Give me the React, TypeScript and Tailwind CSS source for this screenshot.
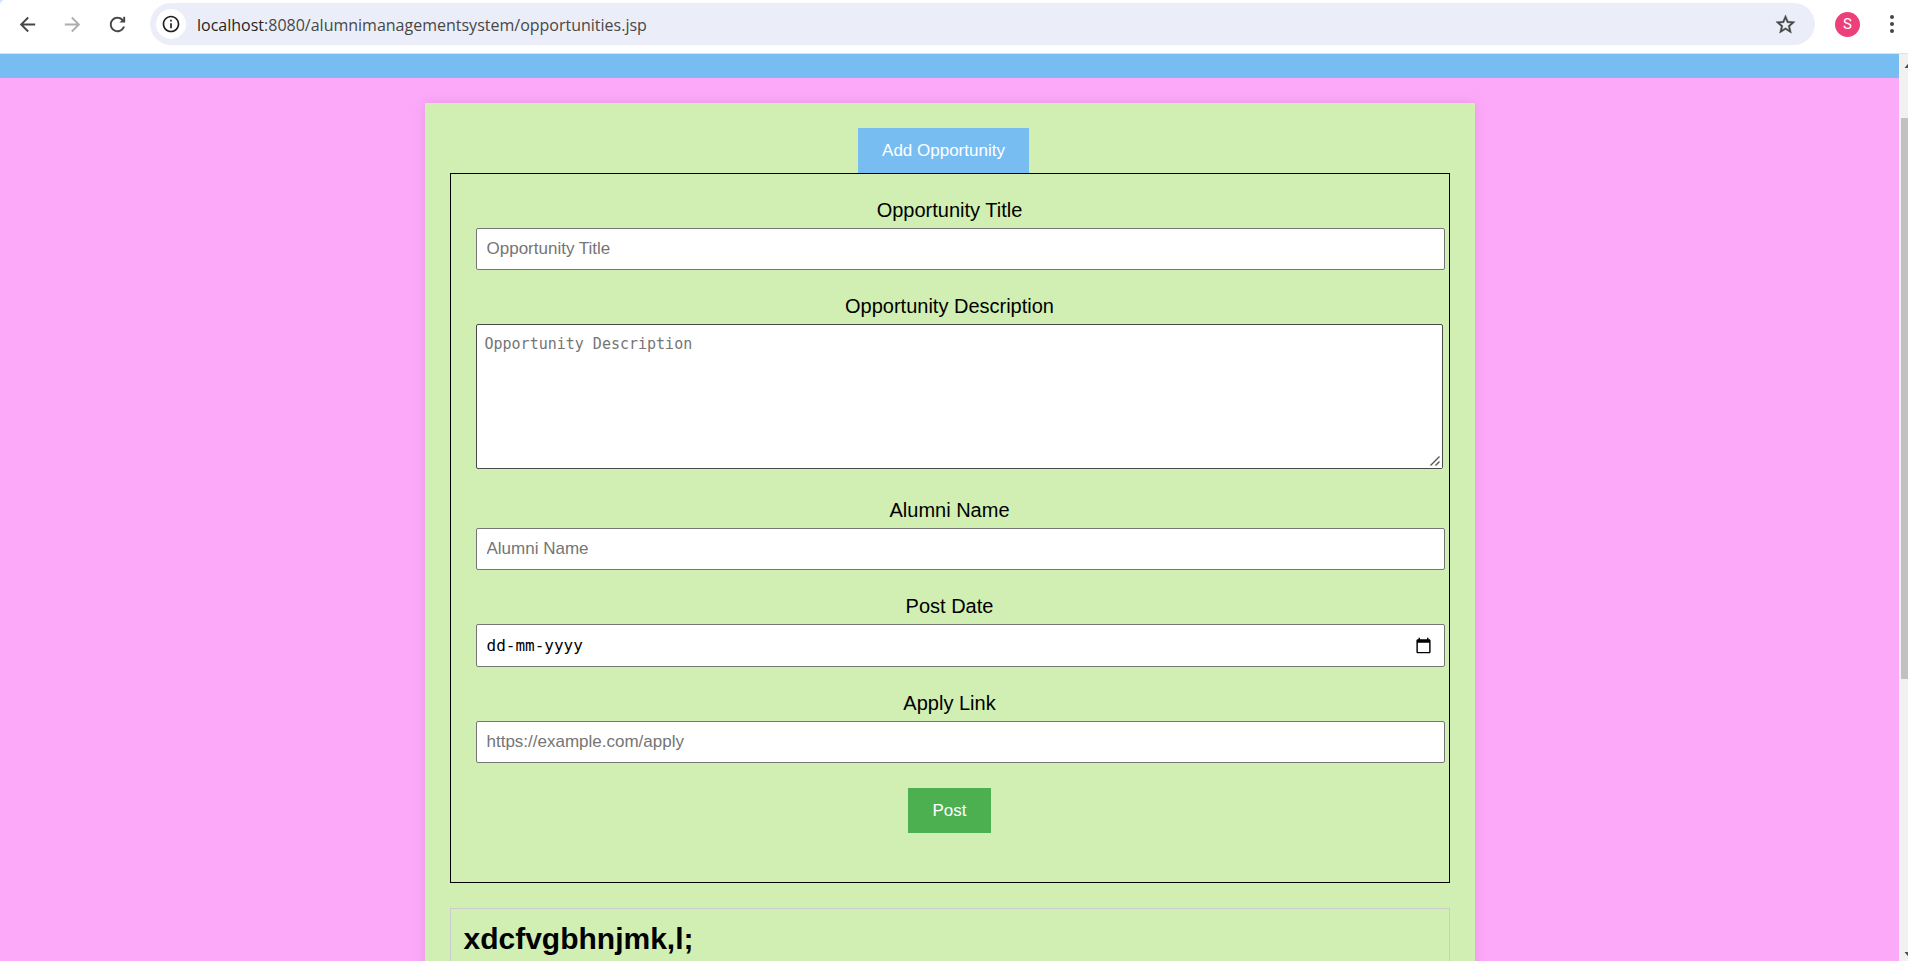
import React from "react";

const labelClass = "block h-[23px] text-xl leading-[23px] text-black";
const fieldClass =
  "block w-[calc(100%+21px)] rounded-[2px] border border-[#767676] bg-white px-[10px] text-[17px] text-black placeholder:text-[#757575]";

function Toolbar() {
  return (
    <header className="h-[54px] shrink-0 border-b border-[#dfe1e5] bg-[#d3e3fd]">
      <nav aria-label="Browser" className="flex h-full items-center rounded-tl-[5px] bg-white pb-[5px]">
        <button type="button" aria-label="Back" className="ml-[15px] flex size-[25px] items-center justify-center text-[#474747]">
          <svg viewBox="0 0 24 24" className="size-[23px]" fill="currentColor">
            <path d="M20 11H7.83l5.59-5.59L12 4l-8 8 8 8 1.41-1.41L7.83 13H20v-2z" />
          </svg>
        </button>
        <button type="button" aria-label="Forward" className="ml-5 flex size-[25px] items-center justify-center text-[#aeaeae]">
          <svg viewBox="0 0 24 24" className="size-[23px]" fill="currentColor">
            <path d="M12 4l-1.41 1.41L16.17 11H4v2h12.17l-5.58 5.59L12 20l8-8z" />
          </svg>
        </button>
        <button type="button" aria-label="Reload" className="ml-5 flex size-[25px] items-center justify-center text-[#474747]">
          <svg viewBox="0 0 24 24" className="size-[23px]" fill="currentColor">
            <path d="M17.65 6.35C16.2 4.9 14.21 4 12 4c-4.42 0-7.99 3.58-7.99 8s3.57 8 7.99 8c3.73 0 6.84-2.55 7.73-6h-2.08c-.82 2.33-3.04 4-5.65 4-3.31 0-6-2.69-6-6s2.69-6 6-6c1.66 0 3.14.69 4.22 1.78L14 10h6V4h-2v2.7z" />
          </svg>
        </button>
        <div className="ml-5 flex h-[42px] flex-1 items-center rounded-full bg-[#ebeef8] px-1.5">
          <button type="button" aria-label="Site information" className="flex size-[30px] items-center justify-center rounded-full bg-white text-[#1f1f1f]">
            <svg viewBox="0 0 24 24" className="size-5" fill="currentColor">
              <path d="M11 7h2v2h-2zm0 4h2v6h-2zm1-9C6.48 2 2 6.48 2 12s4.48 10 10 10 10-4.48 10-10S17.52 2 12 2zm0 18c-4.41 0-8-3.59-8-8s3.59-8 8-8 8 3.59 8 8-3.59 8-8 8z" />
            </svg>
          </button>
          <p className="ml-[11px] flex-1 pt-0.5 font-['Open_Sans','Noto_Sans',sans-serif] text-base leading-6 text-[#474747]">
            <span className="text-[#1f1f1f]">localhost</span>:8080/alumnimanagementsystem/opportunities.jsp
          </p>
          <button type="button" aria-label="Bookmark this page" className="mr-3 flex size-6 items-center justify-center text-[#474747]">
            <svg viewBox="0 0 24 24" className="size-[23px]" fill="currentColor">
              <path d="M22 9.24l-7.19-.62L12 2 9.19 8.63 2 9.24l5.46 4.73L5.82 21 12 17.27 18.18 21l-1.63-7.03L22 9.24zM12 15.4l-3.76 2.27 1-4.28-3.32-2.88 4.38-.38L12 6.1l1.71 4.04 4.38.38-3.32 2.88 1 4.28L12 15.4z" stroke="currentColor" strokeWidth="0.4" />
            </svg>
          </button>
        </div>
        <button type="button" aria-label="Profile" className="ml-5 flex size-[25px] items-center justify-center rounded-full bg-[#ec407a] font-['Roboto',sans-serif] text-[15px] text-white">
          S
        </button>
        <button type="button" aria-label="Menu" className="mr-1 ml-5 flex size-6 items-center justify-center text-[#474747]">
          <svg viewBox="0 0 24 24" className="size-6" fill="currentColor">
            <circle cx="12" cy="5" r="2" />
            <circle cx="12" cy="12" r="2" />
            <circle cx="12" cy="19" r="2" />
          </svg>
        </button>
      </nav>
    </header>
  );
}

function OpportunityForm() {
  return (
    <form className="border border-black px-[25px] pt-[25px] pb-[49px] text-center" onSubmit={(e) => e.preventDefault()}>
      <div className="mb-[25px] flex flex-col gap-1.5">
        <label htmlFor="title" className={labelClass}>Opportunity Title</label>
        <input id="title" type="text" placeholder="Opportunity Title" className={`${fieldClass} h-[42px]`} />
      </div>
      <div className="mb-[30px] flex flex-col gap-1.5">
        <label htmlFor="description" className={labelClass}>Opportunity Description</label>
        <div className="relative w-[calc(100%+19px)]">
          <textarea
            id="description"
            placeholder="Opportunity Description"
            className="block h-[145px] w-full resize rounded-[2px] border border-[#4a4a4a] bg-white px-2 py-[9px] font-['DejaVu_Sans_Mono',monospace] text-[15px] leading-5 text-black placeholder:text-[#757575] [&::-webkit-resizer]:bg-white"
          />
          <svg viewBox="0 0 10 10" className="pointer-events-none absolute right-[3px] bottom-[3px] size-[10px]" fill="none" stroke="#555555" strokeWidth="1.4" aria-hidden="true">
            <path d="M0.500 9.500L9.500 0.500M5.500 9.500L9.500 5.500" />
          </svg>
        </div>
      </div>
      <div className="mb-[25px] flex flex-col gap-1.5">
        <label htmlFor="alumni" className={labelClass}>Alumni Name</label>
        <input id="alumni" type="text" placeholder="Alumni Name" className={`${fieldClass} h-[42px]`} />
      </div>
      <div className="mb-[25px] flex flex-col gap-1.5">
        <label htmlFor="date" className={labelClass}>Post Date</label>
        <div className="flex h-[43px] w-[calc(100%+21px)] items-center rounded-[2px] border border-[#767676] bg-white pr-3 pl-[10px]">
          <input
            id="date"
            type="text"
            placeholder="dd-mm-yyyy"
            className="min-w-0 flex-1 bg-transparent font-['DejaVu_Sans_Mono',monospace] text-base text-black outline-none placeholder:text-black"
          />
          <button type="button" aria-label="Show date picker" className="flex size-[17px] items-center justify-center text-black">
            <svg viewBox="0 0 24 24" className="size-[17px]" fill="currentColor">
              <path d="M20 3h-1V1h-2v2H7V1H5v2H4c-1.1 0-2 .9-2 2v16c0 1.1.9 2 2 2h16c1.1 0 2-.9 2-2V5c0-1.1-.9-2-2-2zm0 18H4V8h16v13z" />
            </svg>
          </button>
        </div>
      </div>
      <div className="mb-[25px] flex flex-col gap-1.5">
        <label htmlFor="link" className={labelClass}>Apply Link</label>
        <input id="link" type="url" placeholder="https://example.com/apply" className={`${fieldClass} h-[42px]`} />
      </div>
      <button type="submit" className="mx-auto block h-[45px] bg-[#4caf50] px-6 text-[17px] leading-5 text-white">
        Post
      </button>
    </form>
  );
}

function ScrollBar() {
  return (
    <div className="flex w-[9px] shrink-0 flex-col overflow-hidden bg-[#f1f1f1] pl-0.5" aria-hidden="true">
      <svg viewBox="0 0 16 64" className="h-16 w-4 shrink-0" fill="#505050">
        <path d="M3.500 14h10L8.500 8z" />
      </svg>
      <div className="w-4 flex-[561] bg-[#c1c1c1]" />
      <div className="flex-[266]" />
      <svg viewBox="0 0 16 16" className="size-4 shrink-0" fill="#505050">
        <path d="M3.500 7h10l-5 6z" />
      </svg>
    </div>
  );
}

export default function App() {
  return (
    <div className="flex h-screen flex-col overflow-hidden font-['Liberation_Sans',Arial,sans-serif]">
      <Toolbar />
      <div className="flex min-h-0 flex-1">
        <main className="min-w-0 flex-1 overflow-hidden bg-[#fda9fa]">
          <div className="h-6 bg-[#77bdf2]" />
          <section className="mx-auto mt-[25px] w-full max-w-[1050px] bg-[#d1efb3] p-[25px] shadow-[0_0_12px_rgba(0,0,0,0.1)]">
            <div className="flex justify-center pr-3">
              <button type="button" className="h-[45px] bg-[#77bdf2] px-6 text-[17px] leading-5 text-white">
                Add Opportunity
              </button>
            </div>
            <OpportunityForm />
            <article className="mt-[25px] min-h-40 border border-[#cccccc] p-[13px]">
              <h2 className="text-3xl leading-[34px] font-bold text-black">xdcfvgbhnjmk,l;</h2>
            </article>
          </section>
        </main>
        <ScrollBar />
      </div>
    </div>
  );
}
